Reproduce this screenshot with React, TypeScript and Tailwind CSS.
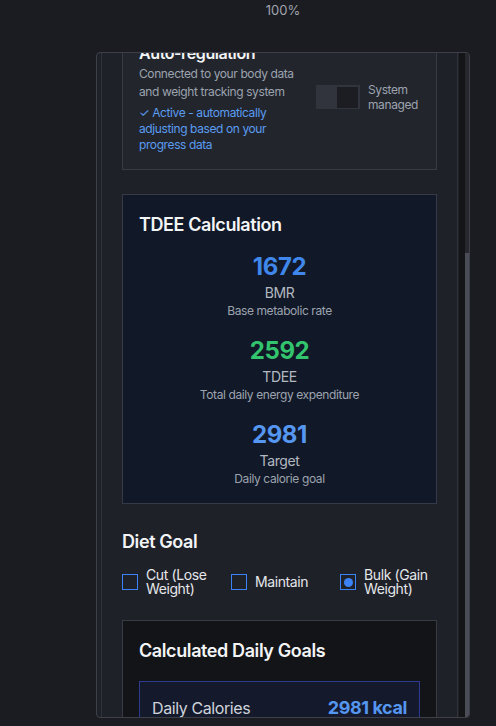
import React from "react";

function Stat({ value, label, desc, color }: { value: string; label: string; desc: string; color: string }) {
  return (
    <div className="flex flex-col items-center">
      <div className={`text-2xl leading-8 font-bold ${color}`}>{value}</div>
      <div className="text-sm leading-5 text-[#b3b8c1]">{label}</div>
      <div className="text-xs leading-4 text-[#9ca3af]">{desc}</div>
    </div>
  );
}

function Check({ label, checked }: { label: string; checked?: boolean }) {
  return (
    <div className="flex items-center gap-2">
      <div className="w-4 h-4 shrink-0 border-[1.5px] border-[#3b82f6] flex items-center justify-center">
        {checked ? <div className="w-[9px] h-[9px] rounded-full bg-[#3b82f6]" /> : null}
      </div>
      <div className="text-sm leading-[14px] text-[#e5e7eb]">{label}</div>
    </div>
  );
}

export default function App() {
  return (
    <div
      className="w-[496px] h-[726px] bg-[#1b1c22] overflow-hidden tracking-[-0.025em]"
      style={{ fontFamily: "Inter, 'Noto Sans', sans-serif" }}
    >
      <div className="h-5 pl-[70px] text-center text-[13px] leading-5 text-[#a0a4ad] tracking-normal">100%</div>
      <div className="mt-8 ml-[96px] w-[374px] h-[666px] border border-[#3d4049] rounded-[4px] bg-[#1f2128] flex overflow-hidden">
        <div className="ml-1 flex-1 border-x border-[#30333b] overflow-hidden">
          <div className="px-5 -mt-[29px]">
            {/* Auto-regulation card */}
            <div className="border border-[#383b44] bg-[#22252c] p-4 flex items-center gap-4 mb-6">
              <div className="flex-1 min-w-0">
                <div className="text-base leading-6 font-semibold text-[#f3f4f6]">Auto-regulation</div>
                <div className="text-xs leading-[18px] text-[#9ca3af]">
                  Connected to your body data and weight tracking system
                </div>
                <div className="mt-1 text-xs leading-4 text-[#5b9cf0]">
                  ✓ Active - automatically adjusting based on your progress data
                </div>
              </div>
              <div className="shrink-0 flex items-center gap-2">
                <div className="w-11 h-6 bg-[#31343d] p-[2px] flex justify-end items-center">
                  <div className="w-[21px] h-[21px] bg-[#1c1d22]" />
                </div>
                <div className="w-[52px] text-xs leading-[15px] text-[#9ca3af]">System managed</div>
              </div>
            </div>

            {/* TDEE card */}
            <div className="border border-[#353a46] bg-[#111827] p-4 mb-6">
              <div className="text-lg leading-7 font-semibold text-[#f3f4f6] mb-3">TDEE Calculation</div>
              <div className="flex flex-col gap-4">
                <Stat value="1672" label="BMR" desc="Base metabolic rate" color="text-[#3f87ea]" />
                <Stat value="2592" label="TDEE" desc="Total daily energy expenditure" color="text-[#33c46e]" />
                <Stat value="2981" label="Target" desc="Daily calorie goal" color="text-[#5596f0]" />
              </div>
            </div>

            {/* Diet goal */}
            <div className="mb-6">
              <div className="text-lg leading-7 font-semibold text-[#f3f4f6] mb-3">Diet Goal</div>
              <div className="grid grid-cols-3 gap-3 h-7">
                <Check label="Cut (Lose Weight)" />
                <Check label="Maintain" />
                <Check label="Bulk (Gain Weight)" checked />
              </div>
            </div>

            {/* Calculated daily goals */}
            <div className="border border-[#383b44] bg-[#131417] p-4">
              <div className="text-lg leading-7 font-semibold text-[#f3f4f6] mb-4">Calculated Daily Goals</div>
              <div className="border border-[#2c3a8f] bg-[#141a2c] p-3 flex items-center justify-between">
                <div className="text-base leading-7 text-[#cfd3da]">Daily Calories</div>
                <div className="text-lg leading-7 font-bold text-[#5596f0]">2981 kcal</div>
              </div>
              <div className="h-24" />
            </div>
          </div>
        </div>
        {/* scrollbar */}
        <div className="w-[6px] bg-[#141517] ml-px" />
        <div className="w-[4px] bg-[#26282e] flex flex-col">
          <div className="h-[200px]" />
          <div className="flex-1 bg-[#4a4d57]" />
        </div>
      </div>
    </div>
  );
}
